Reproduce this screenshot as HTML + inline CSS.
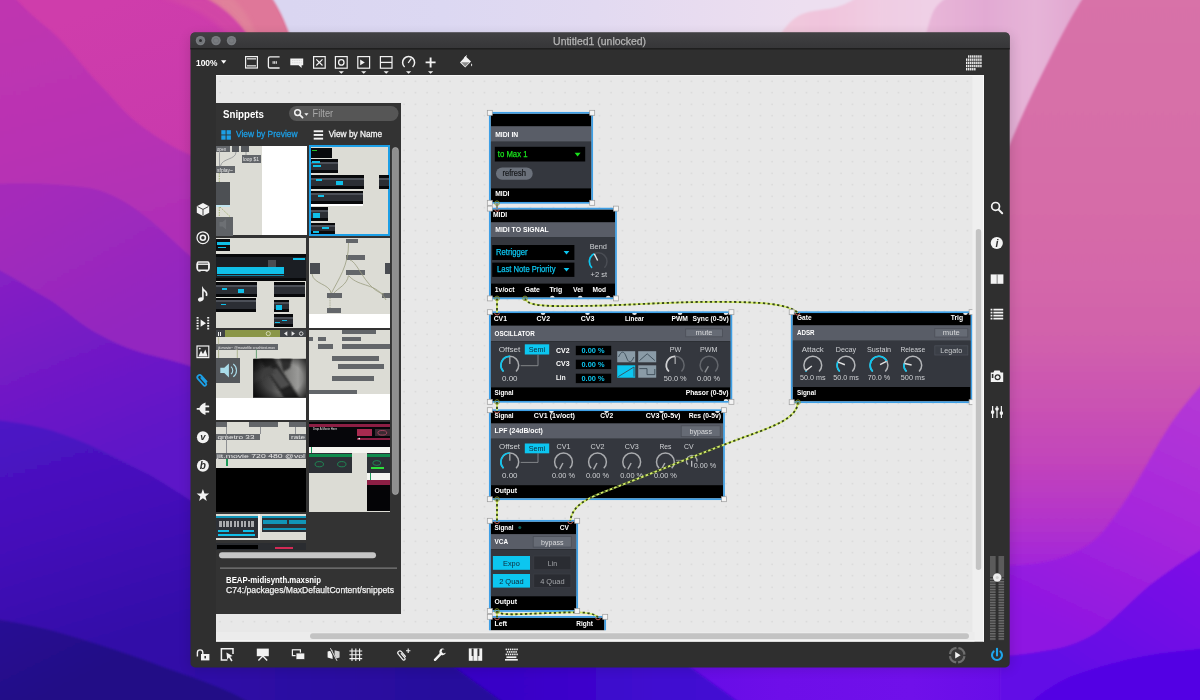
<!DOCTYPE html>
<html lang="en"><head><meta charset="utf-8"><title>Untitled1 (unlocked)</title>
<style>
html,body{margin:0;padding:0;width:1200px;height:700px;overflow:hidden;background:#7a20c8}
svg{display:block;opacity:0.999}
text{font-family:"Liberation Sans",sans-serif;white-space:pre}
</style></head><body>
<svg width="1200" height="700" viewBox="0 0 1200 700">
<defs><linearGradient id="w0" x1="120" y1="0" x2="220" y2="260" gradientUnits="userSpaceOnUse"><stop offset="0" stop-color="#cf3dab"/><stop offset="1" stop-color="#c437ae"/></linearGradient><linearGradient id="w1" x1="60" y1="0" x2="130" y2="240" gradientUnits="userSpaceOnUse"><stop offset="0" stop-color="#bf35b0"/><stop offset="0.5" stop-color="#b933b3"/><stop offset="1" stop-color="#af2fb7"/></linearGradient><linearGradient id="w2" x1="40" y1="185" x2="120" y2="330" gradientUnits="userSpaceOnUse"><stop offset="0" stop-color="#a52cba"/><stop offset="1" stop-color="#9326c0"/></linearGradient><linearGradient id="w3" x1="30" y1="270" x2="110" y2="470" gradientUnits="userSpaceOnUse"><stop offset="0" stop-color="#8520c4"/><stop offset="0.5" stop-color="#7019c6"/><stop offset="1" stop-color="#5d15c8"/></linearGradient><linearGradient id="w4" x1="20" y1="420" x2="90" y2="650" gradientUnits="userSpaceOnUse"><stop offset="0" stop-color="#4d13c5"/><stop offset="0.5" stop-color="#4410b9"/><stop offset="1" stop-color="#320ba8"/></linearGradient><linearGradient id="w5" x1="0" y1="620" x2="40" y2="700" gradientUnits="userSpaceOnUse"><stop offset="0" stop-color="#290b94"/><stop offset="1" stop-color="#220986"/></linearGradient><linearGradient id="gR" x1="1100" y1="0" x2="1100" y2="700" gradientUnits="userSpaceOnUse"><stop offset="0" stop-color="#d872a8"/><stop offset="0.3" stop-color="#d66ca8"/><stop offset="0.47" stop-color="#d263ab"/><stop offset="0.58" stop-color="#ca52b3"/><stop offset="0.66" stop-color="#c244bb"/><stop offset="0.74" stop-color="#b434ca"/><stop offset="0.8" stop-color="#a427d8"/><stop offset="0.86" stop-color="#961ee0"/><stop offset="1" stop-color="#8414e4"/></linearGradient><linearGradient id="r1" x1="1200" y1="385" x2="1080" y2="640" gradientUnits="userSpaceOnUse"><stop offset="0" stop-color="#b53ad5"/><stop offset="0.5" stop-color="#a727dc"/><stop offset="1" stop-color="#8e16e2"/></linearGradient><linearGradient id="r2" x1="1200" y1="550" x2="1100" y2="700" gradientUnits="userSpaceOnUse"><stop offset="0" stop-color="#7e10e6"/><stop offset="1" stop-color="#6208e6"/></linearGradient><linearGradient id="gTop" x1="290" y1="0" x2="800" y2="0" gradientUnits="userSpaceOnUse"><stop offset="0" stop-color="#dad6f1"/><stop offset="0.3" stop-color="#dcd8f2"/><stop offset="0.6" stop-color="#e2daf1"/><stop offset="0.8" stop-color="#e8dcf0"/><stop offset="1" stop-color="#eddff0"/></linearGradient><linearGradient id="gHill" x1="790" y1="0" x2="930" y2="0" gradientUnits="userSpaceOnUse"><stop offset="0" stop-color="#f0c8dc"/><stop offset="0.25" stop-color="#f0c4dc"/><stop offset="0.6" stop-color="#f0cce2"/><stop offset="1" stop-color="#efd0e6"/></linearGradient><linearGradient id="gPk" x1="930" y1="0" x2="1070" y2="0" gradientUnits="userSpaceOnUse"><stop offset="0" stop-color="#e8b6d8"/><stop offset="0.4" stop-color="#e2aad3"/><stop offset="0.75" stop-color="#e6b4d8"/><stop offset="1" stop-color="#e2aad2"/></linearGradient><linearGradient id="gB" x1="683" y1="0" x2="1010" y2="0" gradientUnits="userSpaceOnUse"><stop offset="0" stop-color="#650ce6"/><stop offset="0.3" stop-color="#6e0ee9"/><stop offset="0.7" stop-color="#7010ea"/><stop offset="1" stop-color="#680ce8"/></linearGradient><linearGradient id="gB2" x1="447" y1="0" x2="700" y2="0" gradientUnits="userSpaceOnUse"><stop offset="0" stop-color="#3605c4"/><stop offset="1" stop-color="#4208d2"/></linearGradient><linearGradient id="gB3" x1="150" y1="0" x2="447" y2="0" gradientUnits="userSpaceOnUse"><stop offset="0" stop-color="#320ba8"/><stop offset="0.2" stop-color="#2f0aa6"/><stop offset="1" stop-color="#27089c"/></linearGradient><filter id="b1" x="-5%" y="-5%" width="110%" height="110%"><feGaussianBlur stdDeviation="0.8"/></filter><filter id="b2" x="-10%" y="-10%" width="120%" height="120%"><feGaussianBlur stdDeviation="2"/></filter><filter id="b6" x="-20%" y="-20%" width="140%" height="140%"><feGaussianBlur stdDeviation="6"/></filter></defs>
<rect x="0" y="0" width="620" height="700" fill="url(#w0)" />
<rect x="186" y="662" width="828" height="40" fill="url(#gB)" />
<path d="M186,662 L683,662 L740,703 L186,703 Z" fill="url(#gB2)" filter="url(#b1)"/>
<g filter="url(#b1)">
<path d="M-5,-5 H12 C30,14 40,22 50,30 C70,48 85,70 100,85 C115,100 125,114 140,125 C160,140 175,148 190,155 C215,166 240,180 270,200 V705 H-5 Z" fill="url(#w1)"/>
<path d="M-5,184 C30,182 60,184 90,188 C115,193 135,208 150,220 C168,235 180,248 195,260 C215,276 240,290 270,305 V705 H-5 Z" fill="url(#w2)"/>
<path d="M-5,268 C15,278 32,290 50,300 C68,312 82,326 100,335 C118,345 134,351 150,355 C165,359 178,362 190,366 C215,372 240,378 270,384 V705 H-5 Z" fill="url(#w3)"/>
<path d="M-5,420 C15,422 32,425 50,430 C68,436 84,442 100,450 C118,459 134,467 150,475 C165,484 178,492 190,500 C215,516 240,530 270,545 V705 H-5 Z" fill="url(#w4)"/>
<path d="M150,655 L447,662 L504,703 L150,703 Z" fill="url(#gB3)"/>
<path d="M-5,619 C15,622 32,626 50,630 C68,635 84,640 100,645 C118,651 134,656 150,662 C168,669 184,674 200,680 C218,687 236,694 254,705 H-5 Z" fill="url(#w5)"/>
</g>
<path d="M270,0 C280,12 288,28 296,70 L1000,70 L1000,180 L1100,180 L1100,0 Z" fill="url(#gTop)"/>
<path d="M772,50 C780,32 790,20 800,15 C812,10 824,10 833,8 C842,6 848,3 856,-2 L960,-2 L960,50 Z" fill="url(#gHill)" filter="url(#b1)"/>
<path d="M922,50 C926,36 929,20 934,10 C938,4 942,0 948,-3 L1100,-3 L1100,200 L990,200 L990,50 Z" fill="url(#gPk)" filter="url(#b1)"/>
<path d="M205,-2 C222,7 237,19 248,36 L256,72 L302,72 C299,52 293,40 288.6,32 C285,22 280,10 272,-2 Z" fill="#df7799" filter="url(#b1)"/>
<path d="M205,-2 C222,7 237,19 248,36 L256,72 L262,72 C262,40 250,14 232,-2 Z" fill="#e28a9c" opacity="0.55" filter="url(#b2)"/>
<path d="M160,-2 C190,4 222,22 240,50 L246,36 C236,19 222,7 205,-2 Z" fill="#d44ca4" opacity="0.7" filter="url(#b2)"/>
<path d="M1083,-2 C1070,18 1055,48 1044,70 C1033,92 1020,118 1001,166 L1001,705 L1205,705 L1205,-2 Z" fill="url(#gR)" filter="url(#b1)"/>
<g filter="url(#b1)">
<path d="M1205,381 C1190,398 1180,410 1170,425 C1157,445 1147,465 1135,485 C1124,503 1113,520 1100,535 C1085,551 1060,560 1040,563 C1025,565 1012,566 1000,566 V705 H1205 Z" fill="url(#r1)"/>
<path d="M1205,547 C1185,560 1167,572 1150,585 C1132,600 1117,617 1100,630 C1085,641 1068,647 1050,650 C1035,653 1020,655 1000,656 V705 H1205 Z" fill="url(#r2)"/>
<path d="M1205,648 C1185,651 1168,652 1150,655 C1122,660 1098,667 1075,675 C1058,682 1042,692 1028,705 H1205 Z" fill="#5204e4"/>
</g>
<defs>
<linearGradient id="gTitle" x1="0" y1="0" x2="0" y2="1"><stop offset="0" stop-color="#414143"/><stop offset="1" stop-color="#363638"/></linearGradient>
<clipPath id="cWin"><rect x="190.5" y="32.4" width="819.2" height="635" rx="4.5"/></clipPath>
<pattern id="pGrid" x="216" y="75" width="11.5" height="11.5" patternUnits="userSpaceOnUse"><rect x="3.4" y="5.6" width="1.3" height="1.3" fill="#d3d3d3"/></pattern>
</defs>
<rect x="189" y="35" width="823" height="634" rx="6" fill="#000" opacity="0.13" filter="url(#b6)"/>
<g clip-path="url(#cWin)">
<rect x="190" y="32" width="820" height="636" fill="#2f2f2f" />
<rect x="190" y="32" width="820" height="16.5" fill="url(#gTitle)" />
<rect x="190" y="48" width="820" height="1.5" fill="#1f1f1f" />
<rect x="216" y="75" width="768" height="566.5" fill="#e8e8e8" />
<rect x="216" y="75" width="768" height="566.5" fill="url(#pGrid)" />
<rect x="216" y="75" width="768" height="1" fill="#f6f6f6" />
</g>
<circle cx="200.5" cy="40.6" r="4.7" fill="#797c80"/><circle cx="200.5" cy="40.6" r="2.6" fill="none" stroke="#6c6f73" stroke-width="0.8"/>
<circle cx="216" cy="40.6" r="4.7" fill="#797c80"/><circle cx="216" cy="40.6" r="2.6" fill="none" stroke="#6c6f73" stroke-width="0.8"/>
<circle cx="231.5" cy="40.6" r="4.7" fill="#797c80"/><circle cx="231.5" cy="40.6" r="2.6" fill="none" stroke="#6c6f73" stroke-width="0.8"/>
<circle cx="200.5" cy="40.6" r="1.5" fill="#2c2d2f"/>
<text x="599.6" y="44.7" font-size="10" fill="#b4b4b4" textLength="93" lengthAdjust="spacingAndGlyphs" text-anchor="middle" stroke="#b4b4b4" stroke-width="0.25">Untitled1 (unlocked)</text>
<text x="196" y="65.6" font-size="9.2" fill="#fff" font-weight="bold" textLength="21.5" lengthAdjust="spacingAndGlyphs" >100%</text>
<path d="M221,60.2 h5.4 l-2.7,3.6 z" fill="#fff"/>
<rect x="216" y="103" width="185" height="511" fill="#333333" />
<text x="223" y="117.6" font-size="11" fill="#fff" font-weight="bold" textLength="41" lengthAdjust="spacingAndGlyphs" >Snippets</text>
<rect x="289" y="106" width="109.5" height="15" rx="7.5" fill="#565656"/>
<circle cx="297.6" cy="112.6" r="2.9" fill="none" stroke="#f2f2f2" stroke-width="1.5"/>
<path d="M299.8,114.9 L302.6,117.7" stroke="#f2f2f2" stroke-width="1.7" stroke-linecap="round"/>
<path d="M304.3,113.2 h4.2 l-2.1,2.5 z" fill="#f2f2f2"/>
<text x="312.6" y="117.3" font-size="10.5" fill="#a9a9a9" textLength="20.5" lengthAdjust="spacingAndGlyphs" >Filter</text>
<rect x="221.3" y="130.2" width="4.3" height="4.3" fill="#1c9fe6" />
<rect x="226.6" y="130.2" width="4.3" height="4.3" fill="#1c9fe6" />
<rect x="221.3" y="135.4" width="4.3" height="4.3" fill="#1c9fe6" />
<rect x="226.6" y="135.4" width="4.3" height="4.3" fill="#1c9fe6" />
<text x="236" y="137.4" font-size="9.6" fill="#1c9fe6" textLength="61.5" lengthAdjust="spacingAndGlyphs" stroke="#1c9fe6" stroke-width="0.3">View by Preview</text>
<rect x="313.7" y="130.3" width="9.4" height="1.9" fill="#f4f4f4" />
<rect x="313.7" y="134.0" width="9.4" height="1.9" fill="#f4f4f4" />
<rect x="313.7" y="137.7" width="9.4" height="1.9" fill="#f4f4f4" />
<text x="328.7" y="137.4" font-size="9.6" fill="#f4f4f4" textLength="53.5" lengthAdjust="spacingAndGlyphs" stroke="#f4f4f4" stroke-width="0.3">View by Name</text>
<g shape-rendering="crispEdges">
<rect x="216" y="145.5" width="45.5" height="89.5" fill="#dcdcd5" />
<rect x="261.5" y="145.5" width="45" height="89.5" fill="#ffffff" />
<rect x="216" y="146" width="13.5" height="6.2" fill="#63666a" />
<rect x="232.3" y="145.5" width="6.8" height="6.6" fill="#55585c" />
<rect x="241.3" y="145.5" width="7.6" height="6.6" fill="#55585c" />
<rect x="241.5" y="155" width="19.8" height="8" fill="#63666a" />
<rect x="216" y="166" width="19" height="7" fill="#63666a" />
<rect x="216" y="182" width="14" height="23" fill="#4d5054" />
<rect x="216" y="205" width="14" height="2" fill="#bfe3ee" />
<rect x="216" y="216.5" width="17.3" height="19" fill="#5f6266" />
<rect x="308.7" y="145.3" width="81.6" height="91" fill="#1c9fe6" />
<rect x="310.6" y="147.2" width="77.8" height="87.2" fill="#dcdcd5" />
<rect x="311" y="148" width="20.5" height="9.5" fill="#08090b" />
<rect x="311" y="159" width="26.5" height="13.5" fill="#08090b" />
<rect x="311" y="161.6" width="26.5" height="1.9" fill="#4c5058" />
<rect x="311" y="163.5" width="26.5" height="6.2" fill="#2b2e34" />
<rect x="311" y="175" width="53" height="13.5" fill="#08090b" />
<rect x="311" y="177.6" width="53" height="1.9" fill="#4c5058" />
<rect x="311" y="179.5" width="53" height="6.2" fill="#2b2e34" />
<rect x="378.5" y="175" width="10" height="13.5" fill="#08090b" />
<rect x="378.5" y="177.6" width="10" height="1.9" fill="#4c5058" />
<rect x="378.5" y="179.5" width="10" height="6.2" fill="#2b2e34" />
<rect x="311" y="190.5" width="51.5" height="13" fill="#08090b" />
<rect x="311" y="193.1" width="51.5" height="1.9" fill="#4c5058" />
<rect x="311" y="195.0" width="51.5" height="5.7" fill="#2b2e34" />
<rect x="311" y="207" width="17" height="13.5" fill="#08090b" />
<rect x="311" y="209.6" width="17" height="1.9" fill="#4c5058" />
<rect x="311" y="211.5" width="17" height="6.2" fill="#2b2e34" />
<rect x="311" y="222.5" width="23.5" height="11" fill="#08090b" />
<rect x="311" y="225.1" width="23.5" height="1.9" fill="#4c5058" />
<rect x="311" y="227.0" width="23.5" height="3.7" fill="#2b2e34" />
<rect x="311" y="203.5" width="51.5" height="2.6" fill="#ffffff" />
<rect x="312" y="161" width="8" height="1.6" fill="#10bfe8" />
<rect x="312.5" y="164.5" width="8" height="2" fill="#10bfe8" />
<rect x="316" y="179" width="6" height="2" fill="#10bfe8" />
<rect x="336" y="181" width="7" height="3.5" fill="#10bfe8" />
<rect x="313" y="212.5" width="7" height="5.5" fill="#10bfe8" />
<rect x="318" y="194.5" width="6" height="2" fill="#10bfe8" />
<rect x="322" y="227" width="7" height="2.4" fill="#10bfe8" />
<rect x="313" y="231" width="6" height="1.6" fill="#10bfe8" />
<rect x="312" y="150" width="5" height="1.2" fill="#23c02a" />
<rect x="216" y="237.5" width="90.3" height="90" fill="#dcdcd5" />
<rect x="216" y="238.5" width="14" height="12" fill="#0c0d10" />
<rect x="217" y="241.5" width="12.5" height="3.2" fill="#10bfe8" />
<rect x="218" y="246.5" width="8" height="1.5" fill="#10bfe8" />
<rect x="216" y="254" width="90.3" height="26.5" fill="#08090b" />
<rect x="216" y="256.5" width="90.3" height="21" fill="#1b1e23" />
<rect x="217.3" y="267" width="67" height="6.6" fill="#10bfe8" />
<rect x="217.3" y="274.5" width="67" height="1.2" fill="#0c86a8" />
<rect x="268" y="259.5" width="8" height="7.5" fill="#4a4d52" />
<rect x="293" y="258" width="12" height="2" fill="#10bfe8" />
<rect x="216" y="282" width="41" height="14.5" fill="#08090b" />
<rect x="216" y="284.6" width="41" height="1.9" fill="#4c5058" />
<rect x="216" y="286.5" width="41" height="7.2" fill="#2b2e34" />
<rect x="216" y="297.8" width="40" height="14" fill="#08090b" />
<rect x="216" y="300.40000000000003" width="40" height="1.9" fill="#4c5058" />
<rect x="216" y="302.3" width="40" height="6.7" fill="#2b2e34" />
<rect x="274" y="282" width="31" height="14.5" fill="#08090b" />
<rect x="274" y="284.6" width="31" height="1.9" fill="#4c5058" />
<rect x="274" y="286.5" width="31" height="7.2" fill="#2b2e34" />
<rect x="274" y="299.5" width="14.5" height="12.5" fill="#08090b" />
<rect x="274" y="302.1" width="14.5" height="1.9" fill="#4c5058" />
<rect x="274" y="304.0" width="14.5" height="5.2" fill="#2b2e34" />
<rect x="274" y="314" width="19" height="13" fill="#08090b" />
<rect x="274" y="316.6" width="19" height="1.9" fill="#4c5058" />
<rect x="274" y="318.5" width="19" height="5.7" fill="#2b2e34" />
<rect x="222" y="288" width="5" height="1.8" fill="#10bfe8" />
<rect x="237.5" y="289" width="6" height="3.6" fill="#10bfe8" />
<rect x="221" y="303.5" width="5" height="1.8" fill="#10bfe8" />
<rect x="276" y="305" width="6" height="5" fill="#10bfe8" />
<rect x="275" y="321.5" width="5" height="1.8" fill="#10bfe8" />
<rect x="282" y="319.5" width="5" height="1.8" fill="#10bfe8" />
<rect x="308.7" y="237.5" width="81.6" height="76.5" fill="#dcdcd5" />
<rect x="308.7" y="314" width="81.6" height="13.5" fill="#ffffff" />
<rect x="345.8" y="238.5" width="12.4" height="4.6" fill="#63666a" />
<rect x="345.8" y="254.5" width="19.6" height="5.4" fill="#63666a" />
<rect x="345.8" y="270" width="19.6" height="5.4" fill="#63666a" />
<rect x="327.2" y="293" width="15" height="5.2" fill="#63666a" />
<rect x="327.2" y="308" width="14.2" height="5.2" fill="#63666a" />
<rect x="382" y="293" width="8.3" height="5.2" fill="#63666a" />
<rect x="309.5" y="263.3" width="10.3" height="10.5" fill="#4a4d52" />
<rect x="385.3" y="263.3" width="5" height="10.5" fill="#4a4d52" />
</g>
<g fill="none" stroke="#9a9d80" stroke-width="0.8"><path d="M348.5,243 C349,265 338,280 331.5,293"/><path d="M348.5,275.5 C347,285 338,288 334,293"/><path d="M350,260 C358,262 366,290 384,294"/><path d="M349,276 C360,288 376,282 386,300"/><path d="M312,274 C313,284 330,284 331,293"/><path d="M330,298 L330,308" stroke-dasharray="1.2 1"/></g>
<g shape-rendering="crispEdges">
<rect x="216" y="330" width="90.3" height="67.5" fill="#dcdcd5" />
<rect x="216" y="397.5" width="90.3" height="22.5" fill="#ffffff" />
<rect x="216" y="330" width="90.3" height="7.3" fill="#3f4246" />
<rect x="225" y="330" width="54.5" height="7.3" fill="#8a9648" />
<rect x="217.5" y="331.5" width="1.3" height="4.3" fill="#eee" />
<rect x="220" y="331.5" width="1.3" height="4.3" fill="#eee" />
<rect x="216" y="344.3" width="61.5" height="5.2" fill="#63666a" />
<rect x="216" y="358.3" width="24" height="24.2" fill="#54575b" />
<rect x="253.3" y="359" width="53" height="38.5" fill="#3d3d3d" />
<rect x="308.7" y="330" width="81.6" height="63.5" fill="#dcdcd5" />
<rect x="308.7" y="393.5" width="81.6" height="26.5" fill="#ffffff" />
<rect x="342.3" y="330" width="33.4" height="4.2" fill="#63666a" />
<rect x="308.7" y="336.8" width="4.2" height="4.5" fill="#63666a" />
<rect x="318.2" y="336.8" width="7.8" height="4.5" fill="#63666a" />
<rect x="342.3" y="336.8" width="18.6" height="4.5" fill="#63666a" />
<rect x="318.2" y="344" width="14.8" height="4.5" fill="#63666a" />
<rect x="342.3" y="344" width="48" height="4.5" fill="#63666a" />
<rect x="332.2" y="356.3" width="46.8" height="5" fill="#63666a" />
<rect x="338" y="363.8" width="46.2" height="5" fill="#63666a" />
<rect x="332.2" y="376" width="41.6" height="4.6" fill="#63666a" />
<rect x="308.7" y="389.6" width="48.3" height="4.3" fill="#63666a" />
<rect x="216" y="422" width="90.3" height="45.5" fill="#dcdcd5" />
<rect x="216" y="467.5" width="90.3" height="44.5" fill="#000000" />
<rect x="216" y="422.3" width="11" height="5" fill="#63666a" />
<rect x="249" y="422.3" width="29.2" height="5" fill="#63666a" />
<rect x="289.3" y="422.3" width="17" height="5" fill="#63666a" />
<rect x="216" y="434" width="43.8" height="6" fill="#63666a" />
<rect x="289.3" y="434" width="17" height="6" fill="#63666a" />
<rect x="216" y="453" width="90.3" height="6.3" fill="#63666a" />
<rect x="226" y="427" width="1" height="26" fill="#8d8f92" />
<rect x="260" y="427" width="1" height="7" fill="#8d8f92" />
<rect x="294.5" y="427" width="1" height="7" fill="#8d8f92" />
<rect x="226.2" y="459" width="1.4" height="7" fill="#1c9a5a" />
<rect x="308.7" y="422" width="81.6" height="90" fill="#dcdcd5" />
<rect x="308.7" y="422" width="81.6" height="24.5" fill="#06060a" />
<rect x="308.7" y="423.8" width="81.6" height="3.4" fill="#8c1f44" />
<rect x="357.3" y="429.2" width="14.6" height="7.2" fill="#a82a50" />
<rect x="375" y="429.2" width="15.3" height="7.2" fill="#3a2a32" />
<rect x="357.3" y="437.6" width="33" height="2.4" fill="#8c1f44" />
<rect x="308.7" y="446.5" width="81.6" height="6" fill="#f4f4f0" />
<rect x="308.7" y="452.5" width="43.6" height="20.6" fill="#2d3036" />
<rect x="308.7" y="453.6" width="43.6" height="3.2" fill="#0f8a4c" />
<rect x="367" y="452.5" width="23.3" height="20" fill="#2d3036" />
<rect x="367" y="453.6" width="23.3" height="3.2" fill="#0f8a4c" />
<rect x="371" y="466.6" width="13" height="2.2" fill="#2de03a" />
<rect x="367" y="472.5" width="23.3" height="7.6" fill="#f4f4f0" />
<rect x="367" y="480.3" width="23.3" height="4.4" fill="#8c1f44" />
<rect x="367" y="484.7" width="23.3" height="26.3" fill="#040406" />
<rect x="310.5" y="447" width="1" height="6" fill="#1c9a5a" />
<rect x="369.5" y="473" width="1" height="7" fill="#1c9a5a" />
<rect x="216" y="514.3" width="90.3" height="26" fill="#dcdcd5" />
<rect x="216" y="515.6" width="41.6" height="22" fill="#2d3036" />
<rect x="216" y="515.6" width="41.6" height="2.4" fill="#1195b8" />
<rect x="219.3" y="521" width="2.3" height="6.3" fill="#a9abae" />
<rect x="222.85000000000002" y="521" width="2.3" height="6.3" fill="#a9abae" />
<rect x="226.4" y="521" width="2.3" height="6.3" fill="#a9abae" />
<rect x="229.95000000000002" y="521" width="2.3" height="6.3" fill="#a9abae" />
<rect x="233.5" y="521" width="2.3" height="6.3" fill="#a9abae" />
<rect x="237.05" y="521" width="2.3" height="6.3" fill="#a9abae" />
<rect x="240.60000000000002" y="521" width="2.3" height="6.3" fill="#a9abae" />
<rect x="244.15" y="521" width="2.3" height="6.3" fill="#a9abae" />
<rect x="247.70000000000002" y="521" width="2.3" height="6.3" fill="#a9abae" />
<rect x="251.25" y="521" width="2.3" height="6.3" fill="#a9abae" />
<rect x="218" y="530" width="11" height="2.2" fill="#10bfe8" />
<rect x="243" y="530" width="11" height="2.2" fill="#10bfe8" />
<rect x="218" y="534" width="36.6" height="2.2" fill="#10bfe8" />
<rect x="257.6" y="514.3" width="2.8" height="26" fill="#f1f1ee" />
<rect x="262" y="515.6" width="44.3" height="16" fill="#2d3036" />
<rect x="262" y="515.6" width="44.3" height="2.2" fill="#1195b8" />
<rect x="263.3" y="519.6" width="23.5" height="4.6" fill="#1195b8" />
<rect x="289" y="519.6" width="17.3" height="4.6" fill="#1195b8" />
<rect x="263.3" y="528" width="43" height="2.4" fill="#1195b8" />
<rect x="216" y="542.6" width="90.3" height="7.6" fill="#2a2c30" />
<rect x="217.3" y="545.3" width="41" height="4" fill="#000" />
<rect x="275" y="547" width="18" height="1.6" fill="#d22a55" />
</g>
<g fill="none" stroke-width="0.8"><ellipse cx="319.3" cy="464.2" rx="4.2" ry="2.6" stroke="#1c9a5a"/><ellipse cx="341.8" cy="464.2" rx="4.2" ry="2.6" stroke="#1c9a5a"/><ellipse cx="376.8" cy="463" rx="4" ry="2.4" stroke="#1c9a5a"/><ellipse cx="382.3" cy="432.8" rx="4.4" ry="2.3" stroke="#b84a68"/></g>
<circle cx="359.2" cy="438.6" r="0.9" fill="#f0f0f0"/>
<g fill="none" stroke-width="0.8"><path d="M219.5,152.2 V166" stroke="#8e9093"/><path d="M236,152 C236,160 222,158 220.5,166" stroke="#8e9093"/><path d="M246,152 V155" stroke="#8e9093"/><path d="M219.3,173 V182" stroke="#9aa860" stroke-dasharray="1.5 1"/><path d="M219.3,207 V216.5 M220,207 L230,216.5" stroke="#9aa860" stroke-dasharray="1.5 1"/></g>
<path d="M220.3,367.8 h4 l4.6,-4.4 v14 l-4.6,-4.4 h-4 z" fill="#a9dcea"/>
<path d="M231,366.6 a5,5 0 0 1 0,7.6 M233.3,364 a8,8 0 0 1 0,12.8" fill="none" stroke="#a9dcea" stroke-width="1.1"/>
<path d="M219.5,222 h3 l3.6,-3 v10.5 l-3.6,-3 h-3 z" fill="#6d7074"/>
<defs><linearGradient id="gPh" x1="253" y1="0" x2="306" y2="0" gradientUnits="userSpaceOnUse"><stop offset="0" stop-color="#2b2b2b"/><stop offset="0.35" stop-color="#4a4a4a"/><stop offset="0.62" stop-color="#7e7e7c"/><stop offset="0.85" stop-color="#9a9a98"/><stop offset="1" stop-color="#6e6e6c"/></linearGradient><radialGradient id="gVg" cx="0.55" cy="0.5" r="0.7"><stop offset="0.55" stop-color="#000" stop-opacity="0"/><stop offset="1" stop-color="#000" stop-opacity="0.75"/></radialGradient><clipPath id="cPh"><rect x="253.3" y="358.6" width="53" height="38.6"/></clipPath></defs>
<g clip-path="url(#cPh)"><rect x="253.3" y="358.6" width="53" height="38.6" fill="url(#gPh)"/><path d="M258,356 L272,356 L301,400 L285,400 Z" fill="#232323" filter="url(#b1)"/><path d="M268,371 l9,-3 l13,17 l-9,4 z" fill="#4e4e4e" filter="url(#b1)"/><path d="M253,372 L270,366 L275,372 L253,384 Z" fill="#3c3c3c" filter="url(#b1)"/><path d="M280,358 L292,358 L290,368 L283,372 Z" fill="#2e2e2e" filter="url(#b1)"/><rect x="253.3" y="358.6" width="53" height="38.6" fill="url(#gVg)"/></g>
<g stroke-width="0.9"><path d="M218.6,349.5 V358" stroke="#a9b08a"/><path d="M237.3,349.5 V358" stroke="#a9b08a"/><path d="M256.4,349.5 V358.6" stroke="#5a9a6a"/><path d="M218.6,337.3 V344.3" stroke="#b9bd9a"/></g>
<circle cx="268.3" cy="333.6" r="2.1" fill="none" stroke="#dfe3c8" stroke-width="0.8"/>
<path d="M287.3,331.3 l-3.3,2.3 l3.3,2.4 z M291.6,331.3 l3.3,2.3 l-3.3,2.4 z" fill="#e6e6e6"/><circle cx="301.2" cy="333.6" r="1.8" fill="none" stroke="#e6e6e6" stroke-width="0.9"/>
<text x="217" y="151" font-size="4.6" fill="#e8e8e8" textLength="9" lengthAdjust="spacingAndGlyphs" >open</text>
<text x="243" y="161.2" font-size="5" fill="#e8e8e8" textLength="16" lengthAdjust="spacingAndGlyphs" >loop $1</text>
<text x="217" y="171.6" font-size="5" fill="#e8e8e8" textLength="16" lengthAdjust="spacingAndGlyphs" >sfplay~</text>
<text x="217.5" y="439" font-size="5.4" fill="#e8e8e8" textLength="37" lengthAdjust="spacingAndGlyphs" >qmetro 33</text>
<text x="291" y="439" font-size="5.4" fill="#e8e8e8" textLength="14" lengthAdjust="spacingAndGlyphs" >rate</text>
<text x="217" y="458.2" font-size="5.6" fill="#e8e8e8" textLength="88" lengthAdjust="spacingAndGlyphs" >jit.movie 720 480 @vol</text>
<text x="218" y="348.6" font-size="3.8" fill="#e8e8e8" textLength="57" lengthAdjust="spacingAndGlyphs" >jit.movie~ @moviefile crashtest.mov</text>
<text x="313" y="429.6" font-size="3.2" fill="#e8e8e8" textLength="24" lengthAdjust="spacingAndGlyphs" >Drop A Movie Here</text>
<rect x="392.4" y="147.5" width="6" height="347" rx="3" fill="#8f8f8f" stroke="#b5b5b5" stroke-width="0.6"/>
<rect x="219" y="552.2" width="157" height="6" rx="3" fill="#c6c6c6"/>
<rect x="220" y="567.6" width="177" height="1" fill="#8e8e8e" />
<text x="226" y="583" font-size="9.2" fill="#fff" font-weight="bold" textLength="95" lengthAdjust="spacingAndGlyphs" >BEAP-midisynth.maxsnip</text>
<text x="226" y="592.6" font-size="9.2" fill="#f2f2f2" textLength="168" lengthAdjust="spacingAndGlyphs" stroke="#f2f2f2" stroke-width="0.25">C74:/packages/MaxDefaultContent/snippets</text>
<rect x="490.6" y="113.6" width="100.79999999999995" height="88.4" fill="#000" />
<rect x="490.6" y="126.19999999999999" width="100.79999999999995" height="15.6" fill="#595d67" />
<rect x="490.6" y="141.79999999999998" width="100.79999999999995" height="46.60000000000002" fill="#34373e" />
<rect x="489.8" y="112.8" width="102.39999999999995" height="90.0" fill="none" stroke="#3d9fe6" stroke-width="1.7"/>
<rect x="494.8" y="146.8" width="90.4" height="14.7" fill="#000" />
<text x="497.8" y="156.9" font-size="8.2" fill="#19e01c" textLength="29.7" lengthAdjust="spacingAndGlyphs" stroke="#19e01c" stroke-width="0.25">to Max 1</text>
<path d="M574.6,152.8 h6 l-3,3.6 z" fill="#19e01c"/>
<rect x="496" y="167.5" width="36.7" height="12.3" rx="6.1" fill="#6b717b"/>
<text x="502.5" y="176.4" font-size="8.2" fill="#15171a" textLength="23.5" lengthAdjust="spacingAndGlyphs" stroke="#15171a" stroke-width="0.2">refresh</text>
<text x="495.2" y="136.5" font-size="7.7" fill="#fff" font-weight="bold" textLength="23" lengthAdjust="spacingAndGlyphs" >MIDI IN</text>
<text x="495.2" y="195.8" font-size="7.7" fill="#fff" font-weight="bold" textLength="14.3" lengthAdjust="spacingAndGlyphs" >MIDI</text>
<rect x="490.6" y="209.4" width="124.60000000000002" height="88.20000000000002" fill="#000" />
<rect x="490.6" y="222.20000000000002" width="124.60000000000002" height="15.4" fill="#595d67" />
<rect x="490.6" y="237.60000000000002" width="124.60000000000002" height="46.0" fill="#34373e" />
<rect x="489.8" y="208.6" width="126.20000000000002" height="89.80000000000001" fill="none" stroke="#3d9fe6" stroke-width="1.7"/>
<text x="493" y="217.3" font-size="7.7" fill="#fff" font-weight="bold" textLength="14.2" lengthAdjust="spacingAndGlyphs" >MIDI</text>
<text x="495.2" y="232.1" font-size="7.7" fill="#fff" font-weight="bold" textLength="53.6" lengthAdjust="spacingAndGlyphs" >MIDI TO SIGNAL</text>
<rect x="492.2" y="245" width="82.2" height="15" fill="#000" />
<rect x="492.2" y="262.6" width="82.2" height="14.3" fill="#000" />
<text x="496" y="255.2" font-size="8.2" fill="#0cc6f0" textLength="31.5" lengthAdjust="spacingAndGlyphs" stroke="#0cc6f0" stroke-width="0.25">Retrigger</text>
<path d="M563.6,250.9 h5.8 l-2.9,3.5 z" fill="#0cc6f0"/>
<text x="497" y="272.2" font-size="8.2" fill="#0cc6f0" textLength="58.5" lengthAdjust="spacingAndGlyphs" stroke="#0cc6f0" stroke-width="0.25">Last Note Priority</text>
<path d="M563.6,268 h5.8 l-2.9,3.5 z" fill="#0cc6f0"/>
<text x="598.3" y="249.3" font-size="8" fill="#cfd1d4" textLength="17.3" lengthAdjust="spacingAndGlyphs" text-anchor="middle" >Bend</text>
<path d="M591.98,267.82 A8.8,8.8 0 1 1 604.42,267.82" fill="none" stroke="#4a4d54" stroke-width="1.5" stroke-linecap="butt"/>
<path d="M591.98,267.82 A8.8,8.8 0 0 1 594.20,253.76" fill="none" stroke="#0cc6f0" stroke-width="1.7" stroke-linecap="butt"/>
<path d="M597.66,260.53 L594.30,253.94" stroke="#e6e6e6" stroke-width="1.4" stroke-linecap="butt"/>
<text x="598.8" y="277.3" font-size="8" fill="#cfd1d4" textLength="16.5" lengthAdjust="spacingAndGlyphs" text-anchor="middle" >+2 st</text>
<text x="494.8" y="291.9" font-size="7.7" fill="#fff" font-weight="bold" textLength="19.7" lengthAdjust="spacingAndGlyphs" >1v/oct</text>
<text x="524.5" y="291.9" font-size="7.7" fill="#fff" font-weight="bold" textLength="15.5" lengthAdjust="spacingAndGlyphs" >Gate</text>
<text x="549.5" y="291.9" font-size="7.7" fill="#fff" font-weight="bold" textLength="12.7" lengthAdjust="spacingAndGlyphs" >Trig</text>
<text x="573" y="291.9" font-size="7.7" fill="#fff" font-weight="bold" textLength="10" lengthAdjust="spacingAndGlyphs" >Vel</text>
<text x="592.5" y="291.9" font-size="7.7" fill="#fff" font-weight="bold" textLength="13.5" lengthAdjust="spacingAndGlyphs" >Mod</text>
<path d="M550.0,297.6 a2.3,1.9 0 0 1 4.6,0 z" fill="#e8e8e8"/>
<path d="M577.9000000000001,297.6 a2.3,1.9 0 0 1 4.6,0 z" fill="#e8e8e8"/>
<path d="M605.9000000000001,297.6 a2.3,1.9 0 0 1 4.6,0 z" fill="#e8e8e8"/>
<rect x="490.6" y="313" width="240.0" height="88" fill="#000" />
<rect x="490.6" y="325.6" width="240.0" height="15.6" fill="#595d67" />
<rect x="490.6" y="341.20000000000005" width="240.0" height="46.19999999999993" fill="#34373e" />
<rect x="489.8" y="312.2" width="241.6" height="89.6" fill="none" stroke="#3d9fe6" stroke-width="1.7"/>
<text x="493.7" y="320.8" font-size="7.7" fill="#fff" font-weight="bold" textLength="13.3" lengthAdjust="spacingAndGlyphs" >CV1</text>
<text x="536.5" y="320.8" font-size="7.7" fill="#fff" font-weight="bold" textLength="13.5" lengthAdjust="spacingAndGlyphs" >CV2</text>
<text x="580.7" y="320.8" font-size="7.7" fill="#fff" font-weight="bold" textLength="13.8" lengthAdjust="spacingAndGlyphs" >CV3</text>
<text x="625" y="320.8" font-size="7.7" fill="#fff" font-weight="bold" textLength="19" lengthAdjust="spacingAndGlyphs" >Linear</text>
<text x="671.5" y="320.8" font-size="7.7" fill="#fff" font-weight="bold" textLength="16.5" lengthAdjust="spacingAndGlyphs" >PWM</text>
<text x="692.5" y="320.8" font-size="7.7" fill="#fff" font-weight="bold" textLength="36.2" lengthAdjust="spacingAndGlyphs" >Sync (0-5v)</text>
<path d="M540.7,313 a2.3,1.9 0 0 0 4.6,0 z" fill="#e8e8e8"/>
<path d="M585.2,313 a2.3,1.9 0 0 0 4.6,0 z" fill="#e8e8e8"/>
<path d="M632.2,313 a2.3,1.9 0 0 0 4.6,0 z" fill="#e8e8e8"/>
<path d="M677.7,313 a2.3,1.9 0 0 0 4.6,0 z" fill="#e8e8e8"/>
<path d="M723.7,313 a2.3,1.9 0 0 0 4.6,0 z" fill="#e8e8e8"/>
<text x="494.5" y="335.5" font-size="7.7" fill="#fff" font-weight="bold" textLength="40.2" lengthAdjust="spacingAndGlyphs" >OSCILLATOR</text>
<rect x="685.7" y="329" width="36.8" height="7.8" fill="#666b75" stroke="#4b4f58" stroke-width="0.8"/>
<text x="704.1" y="335.4" font-size="8" fill="#d8d9db" textLength="17" lengthAdjust="spacingAndGlyphs" text-anchor="middle" >mute</text>
<text x="509.5" y="352.3" font-size="8" fill="#cfd1d4" textLength="21.6" lengthAdjust="spacingAndGlyphs" text-anchor="middle" >Offset</text>
<path d="M503.51,371.49 A8.9,8.9 0 1 1 516.09,371.49" fill="none" stroke="#a9abae" stroke-width="1.5" stroke-linecap="butt"/>
<path d="M503.51,371.49 A8.9,8.9 0 0 1 509.80,356.30" fill="none" stroke="#0cc6f0" stroke-width="1.7" stroke-linecap="butt"/>
<path d="M509.80,364.00 L509.80,357.00" stroke="#9fa1a4" stroke-width="1.4" stroke-linecap="butt"/>
<text x="509.8" y="380.8" font-size="8" fill="#cfd1d4" textLength="15.5" lengthAdjust="spacingAndGlyphs" text-anchor="middle" >0.00</text>
<path d="M520.7,365.7 H538 V354.5" fill="none" stroke="#8b8d91" stroke-width="0.9"/>
<rect x="524.8" y="344.3" width="24.4" height="10.2" fill="#0cc6f0" />
<text x="537" y="352.2" font-size="8" fill="#0d2a3a" textLength="16.4" lengthAdjust="spacingAndGlyphs" text-anchor="middle" >Semi</text>
<text x="556" y="353.1" font-size="7.7" fill="#fff" font-weight="bold" textLength="13.5" lengthAdjust="spacingAndGlyphs" >CV2</text>
<text x="556" y="366.3" font-size="7.7" fill="#fff" font-weight="bold" textLength="13.5" lengthAdjust="spacingAndGlyphs" >CV3</text>
<text x="556" y="379.8" font-size="7.7" fill="#fff" font-weight="bold" textLength="9.5" lengthAdjust="spacingAndGlyphs" >Lin</text>
<rect x="575.8" y="345.8" width="35.4" height="9.4" fill="#000" />
<text x="593" y="353.40000000000003" font-size="7.9" fill="#0cc6f0" font-weight="bold" textLength="23" lengthAdjust="spacingAndGlyphs" text-anchor="middle" >0.00 %</text>
<rect x="575.8" y="359.7" width="35.4" height="9.4" fill="#000" />
<text x="593" y="367.3" font-size="7.9" fill="#0cc6f0" font-weight="bold" textLength="23" lengthAdjust="spacingAndGlyphs" text-anchor="middle" >0.00 %</text>
<rect x="575.8" y="373.7" width="35.4" height="9.4" fill="#000" />
<text x="593" y="381.3" font-size="7.9" fill="#0cc6f0" font-weight="bold" textLength="23" lengthAdjust="spacingAndGlyphs" text-anchor="middle" >0.00 %</text>
<rect x="617.2" y="351.2" width="18" height="11.1" fill="#8a9ba7" />
<rect x="638.2" y="351.2" width="18" height="11.1" fill="#8a9ba7" />
<rect x="617.2" y="365.3" width="18" height="12.4" fill="#0cc6f0" />
<rect x="638.2" y="365.3" width="18" height="12.4" fill="#8a9ba7" />
<path d="M618.5,357 c3,-6.5 5.5,-6.5 7.8,0 s4.8,6.5 7.6,0" fill="none" stroke="#3b4b57" stroke-width="0.9"/>
<path d="M639.5,360.6 l7.7,-6.8 l7.7,6.8" fill="none" stroke="#3b4b57" stroke-width="0.9"/>
<path d="M618.3,376.6 L634,367 V376.6" fill="none" stroke="#3b4b57" stroke-width="0.9"/>
<path d="M639.3,368.6 H647 V374.6 H654.8 V369" fill="none" stroke="#3b4b57" stroke-width="0.9"/>
<text x="675.6" y="352.3" font-size="8" fill="#cfd1d4" textLength="11.5" lengthAdjust="spacingAndGlyphs" text-anchor="middle" >PW</text>
<path d="M668.91,371.49 A8.9,8.9 0 1 1 681.49,371.49" fill="none" stroke="#63666c" stroke-width="1.5" stroke-linecap="butt"/>
<path d="M668.91,371.49 A8.9,8.9 0 0 1 675.20,356.30" fill="none" stroke="#cfd0d2" stroke-width="1.7" stroke-linecap="butt"/>
<path d="M675.20,364.00 L675.20,357.00" stroke="#9fa1a4" stroke-width="1.4" stroke-linecap="butt"/>
<text x="675.2" y="380.8" font-size="8" fill="#cfd1d4" textLength="23" lengthAdjust="spacingAndGlyphs" text-anchor="middle" >50.0 %</text>
<text x="708.8" y="352.3" font-size="8" fill="#cfd1d4" textLength="17.5" lengthAdjust="spacingAndGlyphs" text-anchor="middle" >PWM</text>
<path d="M702.71,371.49 A8.9,8.9 0 1 1 715.29,371.49" fill="none" stroke="#63666c" stroke-width="1.5" stroke-linecap="butt"/>
<path d="M708.40,366.24 L704.90,372.30" stroke="#8c8e92" stroke-width="1.4" stroke-linecap="butt"/>
<text x="708.6" y="380.8" font-size="8" fill="#cfd1d4" textLength="23" lengthAdjust="spacingAndGlyphs" text-anchor="middle" >0.00 %</text>
<text x="494.5" y="395.1" font-size="7.7" fill="#fff" font-weight="bold" textLength="19" lengthAdjust="spacingAndGlyphs" >Signal</text>
<text x="685.7" y="395.1" font-size="7.7" fill="#fff" font-weight="bold" textLength="42.8" lengthAdjust="spacingAndGlyphs" >Phasor (0-5v)</text>
<path d="M723.7,401 a2.3,1.9 0 0 1 4.6,0 z" fill="#e8e8e8"/>
<rect x="490.6" y="411" width="232.60000000000002" height="87.39999999999998" fill="#000" />
<rect x="490.6" y="423.3" width="232.60000000000002" height="15.5" fill="#595d67" />
<rect x="490.6" y="438.8" width="232.60000000000002" height="46.39999999999998" fill="#34373e" />
<rect x="489.8" y="410.2" width="234.20000000000002" height="88.99999999999997" fill="none" stroke="#3d9fe6" stroke-width="1.7"/>
<text x="494.5" y="418.4" font-size="7.7" fill="#fff" font-weight="bold" textLength="19" lengthAdjust="spacingAndGlyphs" >Signal</text>
<text x="533.8" y="418.4" font-size="7.7" fill="#fff" font-weight="bold" textLength="41.2" lengthAdjust="spacingAndGlyphs" >CV1 (1v/oct)</text>
<text x="600.2" y="418.4" font-size="7.7" fill="#fff" font-weight="bold" textLength="13" lengthAdjust="spacingAndGlyphs" >CV2</text>
<text x="645.7" y="418.4" font-size="7.7" fill="#fff" font-weight="bold" textLength="34.8" lengthAdjust="spacingAndGlyphs" >CV3 (0-5v)</text>
<text x="688.7" y="418.4" font-size="7.7" fill="#fff" font-weight="bold" textLength="32.3" lengthAdjust="spacingAndGlyphs" >Res (0-5v)</text>
<path d="M549.2,411 a2.3,1.9 0 0 0 4.6,0 z" fill="#e8e8e8"/>
<path d="M604.2,411 a2.3,1.9 0 0 0 4.6,0 z" fill="#e8e8e8"/>
<path d="M659.2,411 a2.3,1.9 0 0 0 4.6,0 z" fill="#e8e8e8"/>
<path d="M715.2,411 a2.3,1.9 0 0 0 4.6,0 z" fill="#e8e8e8"/>
<text x="494.5" y="433.1" font-size="7.7" fill="#fff" font-weight="bold" textLength="48.3" lengthAdjust="spacingAndGlyphs" >LPF (24dB/oct)</text>
<rect x="681.2" y="425.8" width="39" height="10.9" fill="#666b75" stroke="#4b4f58" stroke-width="0.8"/>
<text x="700.7" y="434.05" font-size="8" fill="#d8d9db" textLength="22.5" lengthAdjust="spacingAndGlyphs" text-anchor="middle" >bypass</text>
<text x="509.5" y="449.3" font-size="8" fill="#cfd1d4" textLength="21" lengthAdjust="spacingAndGlyphs" text-anchor="middle" >Offset</text>
<path d="M503.51,468.19 A8.9,8.9 0 1 1 516.09,468.19" fill="none" stroke="#a9abae" stroke-width="1.5" stroke-linecap="butt"/>
<path d="M503.51,468.19 A8.9,8.9 0 0 1 509.80,453.00" fill="none" stroke="#0cc6f0" stroke-width="1.7" stroke-linecap="butt"/>
<path d="M509.80,460.70 L509.80,453.70" stroke="#9fa1a4" stroke-width="1.4" stroke-linecap="butt"/>
<text x="509.8" y="477.8" font-size="8" fill="#cfd1d4" textLength="15.5" lengthAdjust="spacingAndGlyphs" text-anchor="middle" >0.00</text>
<path d="M520.7,462.4 H538 V453.2" fill="none" stroke="#8b8d91" stroke-width="0.9"/>
<rect x="524.8" y="443.5" width="24.4" height="9.8" fill="#0cc6f0" />
<text x="537" y="451.2" font-size="8" fill="#0d2a3a" textLength="16.4" lengthAdjust="spacingAndGlyphs" text-anchor="middle" >Semi</text>
<text x="563.5" y="449.3" font-size="8" fill="#cfd1d4" textLength="14" lengthAdjust="spacingAndGlyphs" text-anchor="middle" >CV1</text>
<path d="M557.21,468.19 A8.9,8.9 0 1 1 569.79,468.19" fill="none" stroke="#a9abae" stroke-width="1.5" stroke-linecap="butt"/>
<path d="M562.94,462.96 L559.56,469.32" stroke="#a9abae" stroke-width="1.4" stroke-linecap="butt"/>
<text x="563.5" y="477.8" font-size="8" fill="#cfd1d4" textLength="23" lengthAdjust="spacingAndGlyphs" text-anchor="middle" >0.00 %</text>
<text x="597.5" y="449.3" font-size="8" fill="#cfd1d4" textLength="14" lengthAdjust="spacingAndGlyphs" text-anchor="middle" >CV2</text>
<path d="M591.21,468.19 A8.9,8.9 0 1 1 603.79,468.19" fill="none" stroke="#a9abae" stroke-width="1.5" stroke-linecap="butt"/>
<path d="M596.94,462.96 L593.56,469.32" stroke="#a9abae" stroke-width="1.4" stroke-linecap="butt"/>
<text x="597.5" y="477.8" font-size="8" fill="#cfd1d4" textLength="23" lengthAdjust="spacingAndGlyphs" text-anchor="middle" >0.00 %</text>
<text x="631.7" y="449.3" font-size="8" fill="#cfd1d4" textLength="14" lengthAdjust="spacingAndGlyphs" text-anchor="middle" >CV3</text>
<path d="M625.41,468.19 A8.9,8.9 0 1 1 637.99,468.19" fill="none" stroke="#a9abae" stroke-width="1.5" stroke-linecap="butt"/>
<path d="M631.14,462.96 L627.76,469.32" stroke="#a9abae" stroke-width="1.4" stroke-linecap="butt"/>
<text x="631.7" y="477.8" font-size="8" fill="#cfd1d4" textLength="23" lengthAdjust="spacingAndGlyphs" text-anchor="middle" >0.00 %</text>
<text x="665.4" y="449.3" font-size="8" fill="#cfd1d4" textLength="12" lengthAdjust="spacingAndGlyphs" text-anchor="middle" >Res</text>
<path d="M659.11,468.19 A8.9,8.9 0 1 1 671.69,468.19" fill="none" stroke="#a9abae" stroke-width="1.5" stroke-linecap="butt"/>
<path d="M664.84,462.96 L661.46,469.32" stroke="#a9abae" stroke-width="1.4" stroke-linecap="butt"/>
<text x="665.4" y="477.8" font-size="8" fill="#cfd1d4" textLength="23" lengthAdjust="spacingAndGlyphs" text-anchor="middle" >0.00 %</text>
<text x="688.8" y="449.3" font-size="8" fill="#cfd1d4" textLength="9.6" lengthAdjust="spacingAndGlyphs" text-anchor="middle" >CV</text>
<path d="M676,460.3 H685.5" stroke="#8b8d91" stroke-width="0.9"/>
<path d="M687.95,464.55 A5.3,5.3 0 1 1 696.92,461.72" fill="none" stroke="#a9abae" stroke-width="1.3" stroke-linecap="butt"/>
<path d="M691.7,460.8 V466.8" stroke="#c9cacc" stroke-width="1.2"/>
<text x="704.9" y="468.3" font-size="8" fill="#cfd1d4" textLength="22.4" lengthAdjust="spacingAndGlyphs" text-anchor="middle" >0.00 %</text>
<text x="494.5" y="493.1" font-size="7.7" fill="#fff" font-weight="bold" textLength="22.5" lengthAdjust="spacingAndGlyphs" >Output</text>
<rect x="792.5" y="313" width="178.29999999999995" height="88.39999999999998" fill="#000" />
<rect x="792.5" y="325.2" width="178.29999999999995" height="15.6" fill="#595d67" />
<rect x="792.5" y="340.8" width="178.29999999999995" height="46.19999999999999" fill="#34373e" />
<rect x="791.7" y="312.2" width="179.89999999999995" height="89.99999999999997" fill="none" stroke="#3d9fe6" stroke-width="1.7"/>
<text x="797" y="320.4" font-size="7.7" fill="#fff" font-weight="bold" textLength="14.6" lengthAdjust="spacingAndGlyphs" >Gate</text>
<text x="950.7" y="320.4" font-size="7.7" fill="#fff" font-weight="bold" textLength="12.4" lengthAdjust="spacingAndGlyphs" >Trig</text>
<path d="M963.2,313 a2.3,1.9 0 0 0 4.6,0 z" fill="#e8e8e8"/>
<text x="797" y="335.4" font-size="7.7" fill="#fff" font-weight="bold" textLength="17.6" lengthAdjust="spacingAndGlyphs" >ADSR</text>
<rect x="934.8" y="328.7" width="33" height="8.3" fill="#666b75" stroke="#4b4f58" stroke-width="0.8"/>
<text x="951.3" y="335.44999999999993" font-size="8" fill="#d8d9db" textLength="17" lengthAdjust="spacingAndGlyphs" text-anchor="middle" >mute</text>
<rect x="934.8" y="345.8" width="33" height="9.2" fill="#3b3f47" stroke="#4b4f58" stroke-width="0.8"/>
<text x="951.3" y="353.20000000000005" font-size="8" fill="#c6c8cb" textLength="22" lengthAdjust="spacingAndGlyphs" text-anchor="middle" >Legato</text>
<text x="812.8" y="352.1" font-size="8" fill="#cfd1d4" textLength="22" lengthAdjust="spacingAndGlyphs" text-anchor="middle" >Attack</text>
<path d="M806.51,371.49 A8.9,8.9 0 1 1 819.09,371.49" fill="none" stroke="#b4b6b9" stroke-width="1.5" stroke-linecap="butt"/>
<path d="M806.51,371.49 A8.9,8.9 0 0 1 805.79,370.68" fill="none" stroke="#0cc6f0" stroke-width="1.7" stroke-linecap="butt"/>
<path d="M811.85,365.94 L806.18,370.37" stroke="#e2e2e2" stroke-width="1.4" stroke-linecap="butt"/>
<text x="812.8" y="380.4" font-size="8" fill="#cfd1d4" textLength="25.5" lengthAdjust="spacingAndGlyphs" text-anchor="middle" >50.0 ms</text>
<text x="846" y="352.1" font-size="8" fill="#cfd1d4" textLength="20.3" lengthAdjust="spacingAndGlyphs" text-anchor="middle" >Decay</text>
<path d="M839.71,371.49 A8.9,8.9 0 1 1 852.29,371.49" fill="none" stroke="#b4b6b9" stroke-width="1.5" stroke-linecap="butt"/>
<path d="M839.71,371.49 A8.9,8.9 0 0 1 837.75,361.87" fill="none" stroke="#0cc6f0" stroke-width="1.7" stroke-linecap="butt"/>
<path d="M844.89,364.75 L838.21,362.05" stroke="#e2e2e2" stroke-width="1.4" stroke-linecap="butt"/>
<text x="846" y="380.4" font-size="8" fill="#cfd1d4" textLength="25.5" lengthAdjust="spacingAndGlyphs" text-anchor="middle" >50.0 ms</text>
<text x="879" y="352.1" font-size="8" fill="#cfd1d4" textLength="24" lengthAdjust="spacingAndGlyphs" text-anchor="middle" >Sustain</text>
<path d="M872.71,371.49 A8.9,8.9 0 1 1 885.29,371.49" fill="none" stroke="#b4b6b9" stroke-width="1.5" stroke-linecap="butt"/>
<path d="M872.71,371.49 A8.9,8.9 0 1 1 886.86,361.02" fill="none" stroke="#0cc6f0" stroke-width="1.7" stroke-linecap="butt"/>
<path d="M880.06,364.64 L886.42,361.26" stroke="#e2e2e2" stroke-width="1.4" stroke-linecap="butt"/>
<text x="879" y="380.4" font-size="8" fill="#cfd1d4" textLength="22.5" lengthAdjust="spacingAndGlyphs" text-anchor="middle" >70.0 %</text>
<text x="912.8" y="352.1" font-size="8" fill="#cfd1d4" textLength="24.8" lengthAdjust="spacingAndGlyphs" text-anchor="middle" >Release</text>
<path d="M906.51,371.49 A8.9,8.9 0 1 1 919.09,371.49" fill="none" stroke="#b4b6b9" stroke-width="1.5" stroke-linecap="butt"/>
<path d="M906.51,371.49 A8.9,8.9 0 0 1 904.09,363.35" fill="none" stroke="#0cc6f0" stroke-width="1.7" stroke-linecap="butt"/>
<path d="M911.63,364.95 L904.58,363.45" stroke="#e2e2e2" stroke-width="1.4" stroke-linecap="butt"/>
<text x="912.8" y="380.4" font-size="8" fill="#cfd1d4" textLength="24" lengthAdjust="spacingAndGlyphs" text-anchor="middle" >500 ms</text>
<text x="797" y="395.1" font-size="7.7" fill="#fff" font-weight="bold" textLength="19" lengthAdjust="spacingAndGlyphs" >Signal</text>
<rect x="490.6" y="521.6" width="85.79999999999995" height="88.60000000000002" fill="#000" />
<rect x="490.6" y="534.1" width="85.79999999999995" height="15.3" fill="#595d67" />
<rect x="490.6" y="549.4" width="85.79999999999995" height="46.90000000000009" fill="#34373e" />
<rect x="489.8" y="520.8000000000001" width="87.39999999999995" height="90.20000000000002" fill="none" stroke="#3d9fe6" stroke-width="1.7"/>
<text x="494.5" y="529.6" font-size="7.7" fill="#fff" font-weight="bold" textLength="19" lengthAdjust="spacingAndGlyphs" >Signal</text>
<circle cx="519.8" cy="527.4" r="1.5" fill="#0b5c52"/>
<text x="559.8" y="529.6" font-size="7.7" fill="#fff" font-weight="bold" textLength="9.2" lengthAdjust="spacingAndGlyphs" >CV</text>
<text x="494.5" y="544.4" font-size="7.7" fill="#fff" font-weight="bold" textLength="13.5" lengthAdjust="spacingAndGlyphs" >VCA</text>
<rect x="533.2" y="536.5" width="38.1" height="10.6" fill="#666b75" stroke="#4b4f58" stroke-width="0.8"/>
<text x="552.25" y="544.6" font-size="8" fill="#d8d9db" textLength="22.5" lengthAdjust="spacingAndGlyphs" text-anchor="middle" >bypass</text>
<rect x="492.9" y="556" width="37.1" height="13.8" fill="#0cc6f0" />
<text x="511.4" y="565.8" font-size="8" fill="#0d2a3a" textLength="16.8" lengthAdjust="spacingAndGlyphs" text-anchor="middle" >Expo</text>
<rect x="492.9" y="574" width="37.1" height="13.6" fill="#0cc6f0" />
<text x="511.4" y="583.6" font-size="8" fill="#0d2a3a" textLength="24.5" lengthAdjust="spacingAndGlyphs" text-anchor="middle" >2 Quad</text>
<rect x="533.8" y="556" width="37.1" height="13.8" fill="#2a2c32" stroke="#3c3f46" stroke-width="0.7"/>
<text x="552.4" y="565.8" font-size="8" fill="#a4a6aa" textLength="9.2" lengthAdjust="spacingAndGlyphs" text-anchor="middle" >Lin</text>
<rect x="533.8" y="574" width="37.1" height="13.6" fill="#2a2c32" stroke="#3c3f46" stroke-width="0.7"/>
<text x="552.4" y="583.6" font-size="8" fill="#a4a6aa" textLength="24.5" lengthAdjust="spacingAndGlyphs" text-anchor="middle" >4 Quad</text>
<text x="494.5" y="603.9" font-size="7.7" fill="#fff" font-weight="bold" textLength="22.5" lengthAdjust="spacingAndGlyphs" >Output</text>
<rect x="490.6" y="617.6" width="113.79999999999995" height="12.600000000000023" fill="#000" />
<path d="M489.8,630.2 V616.8000000000001 H605.1999999999999 V630.2" fill="none" stroke="#3d9fe6" stroke-width="1.7"/>
<text x="494.5" y="625.6" font-size="7.7" fill="#fff" font-weight="bold" textLength="12.5" lengthAdjust="spacingAndGlyphs" >Left</text>
<text x="576.3" y="625.6" font-size="7.7" fill="#fff" font-weight="bold" textLength="16.6" lengthAdjust="spacingAndGlyphs" >Right</text>
<path d="M497,203 V209" fill="none" stroke="#8a8a8a" stroke-width="2"/>
<path d="M497,298.5 V312.5" fill="none" stroke="#d4ee68" stroke-width="1.8"/>
<path d="M497,298.5 V312.5" fill="none" stroke="#35441a" stroke-width="1.8" stroke-dasharray="2.3 2.5"/>
<path d="M525,298.5 C527,303.5 534,305.4 552,306 C620,306.8 660,301.6 720,301.8 C760,302 787,303.5 797.5,312.5" fill="none" stroke="#d4ee68" stroke-width="1.8"/>
<path d="M525,298.5 C527,303.5 534,305.4 552,306 C620,306.8 660,301.6 720,301.8 C760,302 787,303.5 797.5,312.5" fill="none" stroke="#35441a" stroke-width="1.8" stroke-dasharray="2.3 2.5"/>
<path d="M497,402 V410.5" fill="none" stroke="#d4ee68" stroke-width="1.8"/>
<path d="M497,402 V410.5" fill="none" stroke="#35441a" stroke-width="1.8" stroke-dasharray="2.3 2.5"/>
<path d="M497,499.3 V521" fill="none" stroke="#d4ee68" stroke-width="1.8"/>
<path d="M497,499.3 V521" fill="none" stroke="#35441a" stroke-width="1.8" stroke-dasharray="2.3 2.5"/>
<path d="M798,402.2 C797,418 775,426 744,437.2 C700,453.5 648,475 604,491.8 C584,499.5 572,507 570.3,521" fill="none" stroke="#d4ee68" stroke-width="1.8"/>
<path d="M798,402.2 C797,418 775,426 744,437.2 C700,453.5 648,475 604,491.8 C584,499.5 572,507 570.3,521" fill="none" stroke="#35441a" stroke-width="1.8" stroke-dasharray="2.3 2.5"/>
<path d="M497,611 C499,616 520,614 545,613.2 C572,612.3 592,610.5 598,617.4" fill="none" stroke="#d4ee68" stroke-width="1.8"/>
<path d="M497,611 C499,616 520,614 545,613.2 C572,612.3 592,610.5 598,617.4" fill="none" stroke="#35441a" stroke-width="1.8" stroke-dasharray="2.3 2.5"/>
<path d="M497,611 V617.4" fill="none" stroke="#d4ee68" stroke-width="1.8"/>
<path d="M497,611 V617.4" fill="none" stroke="#35441a" stroke-width="1.8" stroke-dasharray="2.3 2.5"/>
<circle cx="497" cy="203.2" r="2.3" fill="none" stroke="#8a9a2a" stroke-width="0.9"/>
<circle cx="497" cy="298.4" r="2.3" fill="none" stroke="#8a9a2a" stroke-width="0.9"/>
<circle cx="525" cy="298.4" r="2.3" fill="none" stroke="#8a9a2a" stroke-width="0.9"/>
<circle cx="497" cy="402" r="2.3" fill="none" stroke="#8a9a2a" stroke-width="0.9"/>
<circle cx="497" cy="499.2" r="2.3" fill="none" stroke="#8a9a2a" stroke-width="0.9"/>
<circle cx="798" cy="402.2" r="2.3" fill="none" stroke="#8a9a2a" stroke-width="0.9"/>
<circle cx="497" cy="611" r="2.3" fill="none" stroke="#8a9a2a" stroke-width="0.9"/>
<path d="M494.6,209.2 a2.4,2.2 0 0 0 4.8,0" fill="none" stroke="#d2665a" stroke-width="0.9"/>
<path d="M494.6,312.8 a2.4,2.2 0 0 0 4.8,0" fill="none" stroke="#d2665a" stroke-width="0.9"/>
<path d="M795.1,312.8 a2.4,2.2 0 0 0 4.8,0" fill="none" stroke="#d2665a" stroke-width="0.9"/>
<path d="M494.6,410.8 a2.4,2.2 0 0 0 4.8,0" fill="none" stroke="#d2665a" stroke-width="0.9"/>
<path d="M494.6,521.4 a2.4,2.2 0 0 0 4.8,0" fill="none" stroke="#d2665a" stroke-width="0.9"/>
<path d="M567.9,521.4 a2.4,2.2 0 0 0 4.8,0" fill="none" stroke="#d2665a" stroke-width="0.9"/>
<path d="M494.6,617.6 a2.4,2.2 0 0 0 4.8,0" fill="none" stroke="#d2665a" stroke-width="0.9"/>
<path d="M595.6,617.6 a2.4,2.2 0 0 0 4.8,0" fill="none" stroke="#d2665a" stroke-width="0.9"/>
<rect x="487.3" y="110.3" width="5" height="5" fill="#f4f4f4" stroke="#9a9a9a" stroke-width="0.7"/>
<rect x="589.7" y="110.3" width="5" height="5" fill="#f4f4f4" stroke="#9a9a9a" stroke-width="0.7"/>
<rect x="487.3" y="200.3" width="5" height="5" fill="#f4f4f4" stroke="#9a9a9a" stroke-width="0.7"/>
<rect x="589.7" y="200.3" width="5" height="5" fill="#f4f4f4" stroke="#9a9a9a" stroke-width="0.7"/>
<rect x="487.3" y="206.1" width="5" height="5" fill="#f4f4f4" stroke="#9a9a9a" stroke-width="0.7"/>
<rect x="613.5" y="206.1" width="5" height="5" fill="#f4f4f4" stroke="#9a9a9a" stroke-width="0.7"/>
<rect x="487.3" y="295.9" width="5" height="5" fill="#f4f4f4" stroke="#9a9a9a" stroke-width="0.7"/>
<rect x="613.5" y="295.9" width="5" height="5" fill="#f4f4f4" stroke="#9a9a9a" stroke-width="0.7"/>
<rect x="487.3" y="309.7" width="5" height="5" fill="#f4f4f4" stroke="#9a9a9a" stroke-width="0.7"/>
<rect x="728.9" y="309.7" width="5" height="5" fill="#f4f4f4" stroke="#9a9a9a" stroke-width="0.7"/>
<rect x="487.3" y="399.3" width="5" height="5" fill="#f4f4f4" stroke="#9a9a9a" stroke-width="0.7"/>
<rect x="728.9" y="399.3" width="5" height="5" fill="#f4f4f4" stroke="#9a9a9a" stroke-width="0.7"/>
<rect x="487.3" y="407.7" width="5" height="5" fill="#f4f4f4" stroke="#9a9a9a" stroke-width="0.7"/>
<rect x="721.5" y="407.7" width="5" height="5" fill="#f4f4f4" stroke="#9a9a9a" stroke-width="0.7"/>
<rect x="487.3" y="496.7" width="5" height="5" fill="#f4f4f4" stroke="#9a9a9a" stroke-width="0.7"/>
<rect x="721.5" y="496.7" width="5" height="5" fill="#f4f4f4" stroke="#9a9a9a" stroke-width="0.7"/>
<rect x="789.2" y="309.7" width="5" height="5" fill="#f4f4f4" stroke="#9a9a9a" stroke-width="0.7"/>
<rect x="969.1" y="309.7" width="5" height="5" fill="#f4f4f4" stroke="#9a9a9a" stroke-width="0.7"/>
<rect x="789.2" y="399.7" width="5" height="5" fill="#f4f4f4" stroke="#9a9a9a" stroke-width="0.7"/>
<rect x="969.1" y="399.7" width="5" height="5" fill="#f4f4f4" stroke="#9a9a9a" stroke-width="0.7"/>
<rect x="487.3" y="518.3" width="5" height="5" fill="#f4f4f4" stroke="#9a9a9a" stroke-width="0.7"/>
<rect x="574.7" y="518.3" width="5" height="5" fill="#f4f4f4" stroke="#9a9a9a" stroke-width="0.7"/>
<rect x="487.3" y="608.5" width="5" height="5" fill="#f4f4f4" stroke="#9a9a9a" stroke-width="0.7"/>
<rect x="574.7" y="608.5" width="5" height="5" fill="#f4f4f4" stroke="#9a9a9a" stroke-width="0.7"/>
<rect x="487.3" y="614.3" width="5" height="5" fill="#f4f4f4" stroke="#9a9a9a" stroke-width="0.7"/>
<rect x="602.7" y="614.3" width="5" height="5" fill="#f4f4f4" stroke="#9a9a9a" stroke-width="0.7"/>
<rect x="972.4" y="76" width="11.6" height="565" fill="#efefef" />
<rect x="975.8" y="229" width="5.4" height="341" rx="2.7" fill="#c3c3c3"/>
<rect x="216" y="632" width="758.5" height="9.5" fill="#ececec" />
<rect x="310" y="633.2" width="659" height="5.8" rx="2.9" fill="#c3c3c3"/>
<rect x="983" y="75" width="1" height="566.5" fill="#fafafa" />
<rect x="216" y="640.4" width="768" height="1.1" fill="#fbfbfb" />
<g ><rect x="245.6" y="56.6" width="11.8" height="11.4" fill="none" stroke="#f2f2f2" stroke-width="1.2"/><rect x="247" y="58" width="9" height="1.6" fill="#bdbdbd"/><rect x="247" y="65" width="9" height="1.6" fill="#bdbdbd"/></g>
<g ><path d="M279.6,56.8 H270 a1.6,1.6 0 0 0 -1.6,1.6 V66.4 a1.6,1.6 0 0 0 1.6,1.6 H279.6" fill="none" stroke="#f2f2f2" stroke-width="1.3"/><rect x="272.6" y="61.2" width="1" height="2.6" fill="#f2f2f2"/><rect x="274.2" y="61.2" width="1" height="2.6" fill="#f2f2f2"/><rect x="275.8" y="61.2" width="1" height="2.6" fill="#f2f2f2"/></g>
<g ><path d="M290.3,58.6 H303.2 V65.2 H301.6 V68 L298.6,65.2 H290.3 Z" fill="#f2f2f2"/><path d="M292,60.6 H301.6 M292,62.8 H301.6" stroke="#bfbfbf" stroke-width="0.6" stroke-dasharray="1.4 0.8"/></g>
<g ><rect x="313.6" y="56.6" width="11.6" height="11.6" fill="none" stroke="#f2f2f2" stroke-width="1.2"/><path d="M316.3,59.3 L322.5,65.5 M322.5,59.3 L316.3,65.5" stroke="#f2f2f2" stroke-width="1.2"/></g>
<g ><rect x="335.4" y="56.6" width="11.8" height="11.6" fill="none" stroke="#f2f2f2" stroke-width="1.2"/><circle cx="341.3" cy="62.4" r="2.7" fill="none" stroke="#f2f2f2" stroke-width="1.3"/></g>
<g ><rect x="357.8" y="56.6" width="11.8" height="11.6" fill="none" stroke="#f2f2f2" stroke-width="1.2"/><path d="M360.2,59.6 L364.8,62.4 L360.2,65.2 Z" fill="#f2f2f2"/></g>
<g ><rect x="380.4" y="56.6" width="11.6" height="11.6" fill="none" stroke="#f2f2f2" stroke-width="1.2"/><path d="M380.4,62.4 H392" stroke="#f2f2f2" stroke-width="1.3"/></g>
<g ><path d="M404.6,67 A6,6 0 1 1 412.6,67" fill="none" stroke="#f2f2f2" stroke-width="1.5"/><path d="M408.2,63 L411.2,58.6" stroke="#f2f2f2" stroke-width="1.3"/></g>
<g ><path d="M430.6,57.4 V67.4 M425.6,62.4 H435.6" stroke="#f2f2f2" stroke-width="1.9"/></g>
<path d="M338.7,71.2 h5.2 l-2.6,2.6 z" fill="#f2f2f2"/>
<path d="M361.09999999999997,71.2 h5.2 l-2.6,2.6 z" fill="#f2f2f2"/>
<path d="M383.59999999999997,71.2 h5.2 l-2.6,2.6 z" fill="#f2f2f2"/>
<path d="M406.0,71.2 h5.2 l-2.6,2.6 z" fill="#f2f2f2"/>
<path d="M428.0,71.2 h5.2 l-2.6,2.6 z" fill="#f2f2f2"/>
<g ><path d="M465.6,56.2 L471,61.4 L465.2,67.6 L460,62.4 Z" fill="#f2f2f2"/><path d="M461.2,62.2 L465.2,66.4 L469.4,62.2 Z" fill="#8c8c8c"/><path d="M464.2,57.6 L467,55.6" stroke="#f2f2f2" stroke-width="1"/><path d="M471.6,63.2 q1.5,2.3 0,3.4 q-1.5,-1.1 0,-3.4 z" fill="#f2f2f2"/></g>
<g fill="#f2f2f2"><rect x="968.03" y="55.30" width="1.4" height="2.4"/><rect x="970.06" y="55.30" width="1.4" height="2.4"/><rect x="972.09" y="55.30" width="1.4" height="2.4"/><rect x="974.12" y="55.30" width="1.4" height="2.4"/><rect x="976.15" y="55.30" width="1.4" height="2.4"/><rect x="978.18" y="55.30" width="1.4" height="2.4"/><rect x="980.21" y="55.30" width="1.4" height="2.4"/><rect x="966.00" y="58.48" width="1.4" height="2.4"/><rect x="968.03" y="58.48" width="1.4" height="2.4"/><rect x="970.06" y="58.48" width="1.4" height="2.4"/><rect x="972.09" y="58.48" width="1.4" height="2.4"/><rect x="974.12" y="58.48" width="1.4" height="2.4"/><rect x="976.15" y="58.48" width="1.4" height="2.4"/><rect x="978.18" y="58.48" width="1.4" height="2.4"/><rect x="980.21" y="58.48" width="1.4" height="2.4"/><rect x="966.00" y="61.66" width="1.4" height="2.4"/><rect x="968.03" y="61.66" width="1.4" height="2.4"/><rect x="970.06" y="61.66" width="1.4" height="2.4"/><rect x="972.09" y="61.66" width="1.4" height="2.4"/><rect x="974.12" y="61.66" width="1.4" height="2.4"/><rect x="976.15" y="61.66" width="1.4" height="2.4"/><rect x="978.18" y="61.66" width="1.4" height="2.4"/><rect x="980.21" y="61.66" width="1.4" height="2.4"/><rect x="966.00" y="64.84" width="1.4" height="2.4"/><rect x="968.03" y="64.84" width="1.4" height="2.4"/><rect x="970.06" y="64.84" width="1.4" height="2.4"/><rect x="972.09" y="64.84" width="1.4" height="2.4"/><rect x="974.12" y="64.84" width="1.4" height="2.4"/><rect x="976.15" y="64.84" width="1.4" height="2.4"/><rect x="978.18" y="64.84" width="1.4" height="2.4"/><rect x="980.21" y="64.84" width="1.4" height="2.4"/><rect x="966.00" y="68.02" width="1.4" height="2.4"/><rect x="968.03" y="68.02" width="1.4" height="2.4"/><rect x="970.06" y="68.02" width="1.4" height="2.4"/><rect x="972.09" y="68.02" width="1.4" height="2.4"/><rect x="974.12" y="68.02" width="1.4" height="2.4"/></g>
<g ><path d="M203,203 L209.2,206.2 V212.8 L203,216 L196.8,212.8 V206.2 Z" fill="#f2f2f2"/><path d="M197.6,206.6 L203,209.4 L208.4,206.6 M203,209.4 V215.4" fill="none" stroke="#2f2f2f" stroke-width="0.9"/></g>
<g ><circle cx="202.9" cy="237.7" r="5.9" fill="none" stroke="#f2f2f2" stroke-width="1.3"/><circle cx="202.9" cy="237.7" r="2.5" fill="none" stroke="#f2f2f2" stroke-width="1.6"/></g>
<g ><rect x="197.4" y="262" width="11.4" height="8.2" rx="1" fill="none" stroke="#f2f2f2" stroke-width="1.5"/><path d="M197,264.2 H209.4" stroke="#f2f2f2" stroke-width="1.4"/><rect x="196.4" y="263.6" width="1.2" height="5" fill="#f2f2f2"/><rect x="208.6" y="263.6" width="1.2" height="5" fill="#f2f2f2"/><path d="M198.4,271.2 H200.6 M205.6,271.2 H207.8" stroke="#f2f2f2" stroke-width="1"/></g>
<g ><ellipse cx="200.6" cy="299.4" rx="2.7" ry="2.1" fill="#f2f2f2" transform="rotate(-20 200.6 299.4)"/><path d="M202.9,299.6 V289 C204.4,291.6 208,291.4 206.4,296" fill="none" stroke="#f2f2f2" stroke-width="1.6"/></g>
<g ><path d="M197.6,317 V329.4 M208.2,317 V329.4" stroke="#f2f2f2" stroke-width="2" stroke-dasharray="1.6 1.1"/><path d="M200.6,319.6 L206,323.2 L200.6,326.8 Z" fill="#f2f2f2"/></g>
<g ><rect x="197" y="346" width="11.8" height="11.6" fill="none" stroke="#f2f2f2" stroke-width="1.2"/><path d="M198.4,356.4 L201,350.8 L203,354 L205.4,349.6 L207.6,356.4 Z" fill="#f2f2f2"/><circle cx="199.8" cy="348.6" r="0.9" fill="#f2f2f2"/></g>
<g ><path d="M206.6,381.6 L201.4,375.8 a2.3,2.3 0 0 0 -3.5,3.1 L203.6,385.2 a1.5,1.5 0 0 0 2.3,-2 L201.2,378" fill="none" stroke="#1c9fe6" stroke-width="1.75" stroke-linecap="round"/></g>
<g ><path d="M205.5,402.5 V415.1 C201.4,413.6 199.5,411.2 199.2,408.85 C199.5,406.4 201.4,404 205.5,402.5 Z" fill="#f2f2f2"/><rect x="196.6" y="407.9" width="3.6" height="1.9" rx="0.9" fill="#f2f2f2"/><rect x="205" y="405.4" width="4.2" height="1.9" rx="0.6" fill="#f2f2f2"/><rect x="205" y="410.7" width="4.2" height="1.9" rx="0.6" fill="#f2f2f2"/></g>
<g ><circle cx="202.9" cy="437.3" r="6" fill="#f2f2f2"/></g>
<text x="203" y="440.3" font-size="9.5" fill="#2f2f2f" font-weight="bold" text-anchor="middle" font-family="Liberation Serif,serif" font-style="italic">v</text>
<g ><circle cx="202.9" cy="465.7" r="6" fill="#f2f2f2"/></g>
<text x="202.8" y="469.2" font-size="10" fill="#2f2f2f" font-weight="bold" text-anchor="middle" font-family="Liberation Serif,serif" font-style="italic">b</text>
<polygon points="202.90,489.00 204.49,493.42 209.18,493.56 205.47,496.43 206.78,500.94 202.90,498.30 199.02,500.94 200.33,496.43 196.62,493.56 201.31,493.42" fill="#f2f2f2"/>
<g ><circle cx="995.6" cy="206.4" r="3.9" fill="none" stroke="#f2f2f2" stroke-width="1.7"/><path d="M998.6,209.6 L1002.2,213.2" stroke="#f2f2f2" stroke-width="2" stroke-linecap="round"/></g>
<g ><circle cx="996.8" cy="243" r="6.1" fill="#f2f2f2"/></g>
<text x="997" y="246.8" font-size="10.5" fill="#2f2f2f" font-weight="bold" text-anchor="middle" font-family="Liberation Serif,serif" font-style="italic">i</text>
<g ><rect x="990.7" y="274.4" width="12.7" height="9.4" fill="#f2f2f2"/><rect x="996.75" y="274.4" width="0.7" height="9.4" fill="#555"/></g>
<g ><path d="M993.4,309.6 H1003.2 M993.4,312.6 H1003.2 M993.4,315.6 H1003.2 M993.4,318.6 H1003.2" stroke="#f2f2f2" stroke-width="1.7"/><path d="M990.6,309.6 H992.4 M990.6,312.6 H992.4 M990.6,315.6 H992.4 M990.6,318.6 H992.4" stroke="#f2f2f2" stroke-width="1.7"/></g>
<g ><path d="M990.8,372.6 H993.4 L994.4,370.6 H999.6 L1000.6,372.6 H1003.2 V382 H990.8 Z" fill="#f2f2f2"/><circle cx="997.6" cy="377.2" r="3" fill="#2f2f2f"/><circle cx="997.6" cy="377.2" r="1.7" fill="#f2f2f2"/><rect x="991.8" y="374" width="1.6" height="4" fill="#2f2f2f"/></g>
<g ><path d="M992.6,406 V418 M997,406 V418 M1001.4,406 V418" stroke="#f2f2f2" stroke-width="1.2"/><rect x="991" y="410.6" width="3.2" height="3.2" rx="0.8" fill="#f2f2f2"/><rect x="995.4" y="407.4" width="3.2" height="3.2" rx="0.8" fill="#f2f2f2"/><rect x="999.8" y="411.6" width="3.2" height="3.2" rx="0.8" fill="#f2f2f2"/></g>
<rect x="990" y="556" width="5.6" height="84.5" fill="#383838" />
<rect x="998.5" y="556" width="5.6" height="84.5" fill="#383838" />
<rect x="990" y="556" width="5.6" height="21" fill="#5b5b5b" />
<rect x="998.5" y="556" width="5.6" height="21" fill="#5b5b5b" />
<g fill="#6a6a6a"><rect x="990" y="578.40" width="5.6" height="1.5"/><rect x="998.5" y="578.40" width="5.6" height="1.5"/><rect x="990" y="581.00" width="5.6" height="1.5"/><rect x="998.5" y="581.00" width="5.6" height="1.5"/><rect x="990" y="583.60" width="5.6" height="1.5"/><rect x="998.5" y="583.60" width="5.6" height="1.5"/><rect x="990" y="586.20" width="5.6" height="1.5"/><rect x="998.5" y="586.20" width="5.6" height="1.5"/><rect x="990" y="588.80" width="5.6" height="1.5"/><rect x="998.5" y="588.80" width="5.6" height="1.5"/><rect x="990" y="591.40" width="5.6" height="1.5"/><rect x="998.5" y="591.40" width="5.6" height="1.5"/><rect x="990" y="594.00" width="5.6" height="1.5"/><rect x="998.5" y="594.00" width="5.6" height="1.5"/><rect x="990" y="596.60" width="5.6" height="1.5"/><rect x="998.5" y="596.60" width="5.6" height="1.5"/><rect x="990" y="599.20" width="5.6" height="1.5"/><rect x="998.5" y="599.20" width="5.6" height="1.5"/><rect x="990" y="601.80" width="5.6" height="1.5"/><rect x="998.5" y="601.80" width="5.6" height="1.5"/><rect x="990" y="604.40" width="5.6" height="1.5"/><rect x="998.5" y="604.40" width="5.6" height="1.5"/><rect x="990" y="607.00" width="5.6" height="1.5"/><rect x="998.5" y="607.00" width="5.6" height="1.5"/><rect x="990" y="609.60" width="5.6" height="1.5"/><rect x="998.5" y="609.60" width="5.6" height="1.5"/><rect x="990" y="612.20" width="5.6" height="1.5"/><rect x="998.5" y="612.20" width="5.6" height="1.5"/><rect x="990" y="614.80" width="5.6" height="1.5"/><rect x="998.5" y="614.80" width="5.6" height="1.5"/><rect x="990" y="617.40" width="5.6" height="1.5"/><rect x="998.5" y="617.40" width="5.6" height="1.5"/><rect x="990" y="620.00" width="5.6" height="1.5"/><rect x="998.5" y="620.00" width="5.6" height="1.5"/><rect x="990" y="622.60" width="5.6" height="1.5"/><rect x="998.5" y="622.60" width="5.6" height="1.5"/><rect x="990" y="625.20" width="5.6" height="1.5"/><rect x="998.5" y="625.20" width="5.6" height="1.5"/><rect x="990" y="627.80" width="5.6" height="1.5"/><rect x="998.5" y="627.80" width="5.6" height="1.5"/><rect x="990" y="630.40" width="5.6" height="1.5"/><rect x="998.5" y="630.40" width="5.6" height="1.5"/><rect x="990" y="633.00" width="5.6" height="1.5"/><rect x="998.5" y="633.00" width="5.6" height="1.5"/><rect x="990" y="635.60" width="5.6" height="1.5"/><rect x="998.5" y="635.60" width="5.6" height="1.5"/><rect x="990" y="638.20" width="5.6" height="1.5"/><rect x="998.5" y="638.20" width="5.6" height="1.5"/></g>
<circle cx="997.2" cy="577.5" r="4.2" fill="#ececec"/><circle cx="997.2" cy="577.5" r="1.6" fill="#d2d2d2"/>
<g ><rect x="201" y="654" width="8.4" height="6.4" fill="#f2f2f2"/><rect x="204.4" y="656" width="1.6" height="2.4" fill="#2f2f2f"/><path d="M197.4,656.4 V652.6 a2.7,2.7 0 0 1 5.4,0 V654" fill="none" stroke="#f2f2f2" stroke-width="1.4"/></g>
<g ><path d="M233,654 V648.8 H221.4 V660 H227.4" fill="none" stroke="#f2f2f2" stroke-width="1.5"/><path d="M226.4,652.6 L232.6,656 L230.2,656.8 L232.6,660.6 L231.2,661.4 L229,657.6 L227.2,659.4 Z" fill="#f2f2f2"/></g>
<g ><rect x="256.8" y="648.6" width="12" height="7.6" fill="#f2f2f2"/><path d="M262.8,656 L258.4,660.6 M262.8,656 L267.2,660.6" stroke="#f2f2f2" stroke-width="1.4"/></g>
<g ><rect x="292.4" y="649.8" width="8" height="5.8" fill="none" stroke="#f2f2f2" stroke-width="1.2"/><rect x="296" y="653" width="8.8" height="6.6" fill="#f2f2f2" stroke="#2f2f2f" stroke-width="0.8"/></g>
<g ><path d="M327.6,651.6 L332.6,650.2 V659 L327.6,657.6 Z" fill="#f2f2f2"/><path d="M339.6,651.6 L334.6,650.2 V659 L339.6,657.6 Z" fill="#d0d0d0"/><path d="M330,648.4 L336.6,661" stroke="#2f2f2f" stroke-width="2"/><path d="M330.4,648.2 L337,660.8" stroke="#f2f2f2" stroke-width="0.9"/></g>
<g ><path d="M352,648.4 V661 M355.8,648.4 V661 M359.6,648.4 V661 M349.4,651 H362.2 M349.4,654.8 H362.2 M349.4,658.6 H362.2" stroke="#f2f2f2" stroke-width="1.1"/></g>
<g ><path d="M405.4,656.4 L401.4,651.6 a2,2 0 0 0 -3.1,2.6 L402.8,659.6 a1.3,1.3 0 0 0 2,-1.7 L401.2,653.6" fill="none" stroke="#f2f2f2" stroke-width="1.2" stroke-linecap="round"/><path d="M408.2,648.6 V653 M406,650.8 H410.4" stroke="#f2f2f2" stroke-width="1.1"/></g>
<g ><path d="M435,659.8 L441,653.6" stroke="#f2f2f2" stroke-width="2.4" stroke-linecap="round"/><path d="M444.6,649.2 a3.3,3.3 0 1 0 1.2,3.6 l-2.6,0.6 l-1.6,-1.7 l0.7,-2.3 z" fill="#f2f2f2"/></g>
<g ><rect x="468.8" y="648.4" width="13.4" height="12.4" fill="#f2f2f2"/><path d="M472.6,648.4 V656 M478.4,648.4 V656" stroke="#2f2f2f" stroke-width="1.9"/><path d="M473.2,656 V660.8 M477.8,656 V660.8" stroke="#2f2f2f" stroke-width="0.6"/></g>
<g fill="#f2f2f2"><rect x="505.60" y="648.60" width="1.45" height="1.6"/><rect x="507.75" y="648.60" width="1.45" height="1.6"/><rect x="509.90" y="648.60" width="1.45" height="1.6"/><rect x="512.05" y="648.60" width="1.45" height="1.6"/><rect x="514.20" y="648.60" width="1.45" height="1.6"/><rect x="516.35" y="648.60" width="1.45" height="1.6"/><rect x="506.80" y="651.10" width="1.45" height="1.6"/><rect x="508.95" y="651.10" width="1.45" height="1.6"/><rect x="511.10" y="651.10" width="1.45" height="1.6"/><rect x="513.25" y="651.10" width="1.45" height="1.6"/><rect x="515.40" y="651.10" width="1.45" height="1.6"/><rect x="505.60" y="653.60" width="1.45" height="1.6"/><rect x="507.75" y="653.60" width="1.45" height="1.6"/><rect x="509.90" y="653.60" width="1.45" height="1.6"/><rect x="512.05" y="653.60" width="1.45" height="1.6"/><rect x="514.20" y="653.60" width="1.45" height="1.6"/><rect x="516.35" y="653.60" width="1.45" height="1.6"/><rect x="506.4" y="656.4" width="10" height="1.7"/><rect x="505" y="659" width="12.8" height="1.6"/></g>
<g ><circle cx="957.2" cy="655.2" r="7.3" fill="#3a3a3a" stroke="#6e6e6e" stroke-width="2.2" stroke-dasharray="9.47 2" stroke-dashoffset="-1"/><path d="M955.2,651.8 L960.6,655.2 L955.2,658.6 Z" fill="#f2f2f2"/></g>
<g ><path d="M993.6,651.4 a5,5 0 1 0 6.8,0" fill="none" stroke="#1fa6ee" stroke-width="2.1" stroke-linecap="round"/><path d="M997,648.8 V655.4" stroke="#1fa6ee" stroke-width="2.1" stroke-linecap="round"/></g>
</svg>
</body></html>
